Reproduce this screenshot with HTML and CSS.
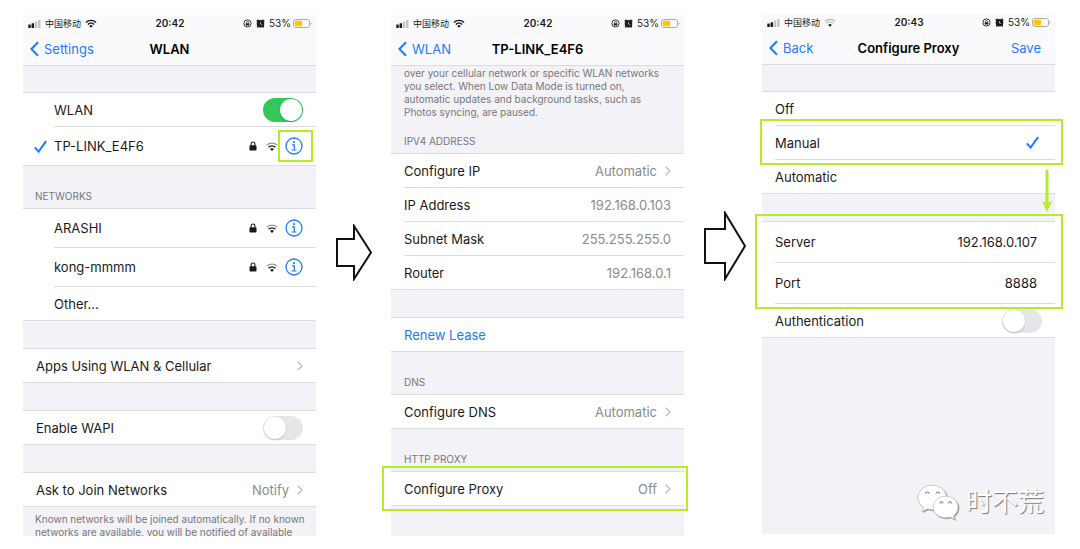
FILE: index.html
```html
<!DOCTYPE html>
<html lang="en">
<head>
  <meta charset="UTF-8">
  <title>iPhone proxy setup</title>
  <link rel="stylesheet" href="styles.css">
</head>
<body>
  <!-- shared icons -->
  <svg class="sprite" aria-hidden="true">
    <symbol id="signal" viewBox="0 0 14 9">
      <rect x="0" y="5" width="2.8" height="4" rx=".6"/>
      <rect x="3.7" y="3.6" width="2.8" height="5.4" rx=".6"/>
      <rect x="7.4" y="1.8" width="2.6" height="7.2" rx=".6" opacity=".25"/>
      <rect x="11.1" y="0" width="2.6" height="9" rx=".6" opacity=".25"/>
    </symbol>
    <symbol id="wifi" viewBox="0 0 12 9">
      <path d="M.9 3.4a7.4 7.4 0 0 1 10.2 0" fill="none" stroke="currentColor" stroke-width="1.4"/>
      <path d="M2.8 5.4a4.7 4.7 0 0 1 6.4 0" fill="none" stroke="currentColor" stroke-width="1.4"/>
      <path d="M4.2 6.900a2.700 2.700 0 0 1 3.600 0L6 8.800z"/>
    </symbol>
    <symbol id="wifi-mid" viewBox="0 0 12 9">
      <path d="M.8 3.300a7.500 7.500 0 0 1 10.400 0" fill="none" stroke="currentColor" stroke-width="1.3" opacity=".45"/>
      <path d="M2.600 5.300a5 5 0 0 1 6.800 0" fill="none" stroke="currentColor" stroke-width="1.5"/>
      <path d="M4.100 6.900a2.800 2.800 0 0 1 3.800 0L6 8.900z"/>
    </symbol>
    <symbol id="wifi-low" viewBox="0 0 12 9">
      <path d="M.9 3.4a7.4 7.4 0 0 1 10.2 0M2.8 5.4a4.7 4.7 0 0 1 6.4 0" fill="none" stroke="currentColor" stroke-width="1.2" opacity=".3"/>
      <path d="M4.2 6.9a2.7 2.7 0 0 1 3.6 0L6 8.8z"/>
    </symbol>
    <symbol id="rotation" viewBox="0 0 9 9">
      <circle cx="4.5" cy="4.5" r="3.6" fill="none" stroke="currentColor" stroke-width=".9"/>
      <rect x="2.700" y="4.200" width="3.600" height="2.200" rx=".4"/>
      <path d="M3.500 4.400v-.8a1 1 0 0 1 2 0v.8" fill="none" stroke="currentColor" stroke-width=".7"/>
    </symbol>
    <symbol id="alarm" viewBox="0 0 9 9">
      <circle cx="4.5" cy="4.800" r="3.800"/>
      <path d="M.7 2.600L2.600.8M8.300 2.600L6.400.8M2.200 7.400l-.9 1.100M6.800 7.400l.9 1.100" stroke="currentColor" stroke-width="1.400"/>
      <path d="M4.500 3v2.100l1.500.5" fill="none" stroke="#fff" stroke-width=".6"/>
    </symbol>
    <symbol id="battery" viewBox="0 0 19 9">
      <rect x=".5" y=".5" width="16" height="8" rx="2.2" fill="none" stroke="#a9a9ad"/>
      <rect x="1.7" y="1.7" width="7.6" height="5.6" rx="1" fill="#fdc800"/>
      <path d="M17.6 3.2q1 .3 1 1.3t-1 1.3z" fill="#a9a9ad"/>
    </symbol>
    <symbol id="back" viewBox="0 0 9 16">
      <path d="M8 1.2L1.4 8 8 14.8" fill="none" stroke="currentColor" stroke-width="2"/>
    </symbol>
    <symbol id="chevron" viewBox="0 0 6 10">
      <path d="M.7.8L5 5 .7 9.2" fill="none" stroke="currentColor" stroke-width="1.3"/>
    </symbol>
    <symbol id="check" viewBox="0 0 12 12">
      <path d="M.8 6.7l3.4 4L11.2 1" fill="none" stroke="currentColor" stroke-width="1.8"/>
    </symbol>
    <symbol id="lock" viewBox="0 0 8 10">
      <rect x=".5" y="4.2" width="7" height="5.3" rx=".8"/>
      <path d="M2.1 4.6V2.9a1.9 1.9 0 0 1 3.8 0v1.7" fill="none" stroke="currentColor" stroke-width="1.1"/>
    </symbol>
    <symbol id="info" viewBox="0 0 18 18">
      <circle cx="9" cy="9" r="8" fill="none" stroke="currentColor" stroke-width="1.3"/>
      <circle cx="8.900" cy="5.100" r="1.100"/>
      <path d="M7 7.800h2.300v5M6.500 13h5" fill="none" stroke="currentColor" stroke-width="1.200"/>
    </symbol>
  </svg>

  <main class="steps">
    <section class="phone">
      <div class="status-bar">
        <div class="status-left">
          <svg class="i-signal"><use href="#signal"/></svg>
          <span class="carrier">中国移动</span>
          <svg class="i-wifi"><use href="#wifi"/></svg>
        </div>
        <span class="clock">20:42</span>
        <div class="status-right">
          <svg class="i-small"><use href="#rotation"/></svg>
          <svg class="i-small"><use href="#alarm"/></svg>
          <span class="percent">53%</span>
          <svg class="i-battery"><use href="#battery"/></svg>
        </div>
      </div>
      <header class="nav">
        <a class="nav-back" href="#"><svg class="i-back"><use href="#back"/></svg>Settings</a>
        <h2>WLAN</h2>
      </header>

      <div class="group group-first group-indent">
        <label class="row">
          <span>WLAN</span>
          <input class="switch" type="checkbox" checked>
        </label>
        <div class="row row-tall">
          <svg class="i-check current"><use href="#check"/></svg>
          <span>TP-LINK_E4F6</span>
          <svg class="i-lock"><use href="#lock"/></svg>
          <svg class="i-wifi"><use href="#wifi-mid"/></svg>
          <button class="info marked" aria-label="TP-LINK_E4F6 details"><svg class="i-info"><use href="#info"/></svg></button>
        </div>
      </div>

      <h3>NETWORKS</h3>
      <div class="group group-indent">
        <div class="row row-tall">
          <span>ARASHI</span>
          <svg class="i-lock"><use href="#lock"/></svg>
          <svg class="i-wifi"><use href="#wifi-mid"/></svg>
          <button class="info" aria-label="ARASHI details"><svg class="i-info"><use href="#info"/></svg></button>
        </div>
        <div class="row row-tall">
          <span>kong-mmmm</span>
          <svg class="i-lock"><use href="#lock"/></svg>
          <svg class="i-wifi"><use href="#wifi-mid"/></svg>
          <button class="info" aria-label="kong-mmmm details"><svg class="i-info"><use href="#info"/></svg></button>
        </div>
        <a class="row" href="#"><span>Other...</span></a>
      </div>

      <div class="group group-gap">
        <a class="row" href="#">
          <span>Apps Using WLAN &amp; Cellular</span>
          <svg class="i-chevron"><use href="#chevron"/></svg>
        </a>
      </div>

      <div class="group group-gap">
        <label class="row">
          <span>Enable WAPI</span>
          <input class="switch" type="checkbox">
        </label>
      </div>

      <div class="group group-gap">
        <a class="row" href="#">
          <span>Ask to Join Networks</span>
          <span class="value">Notify</span>
          <svg class="i-chevron"><use href="#chevron"/></svg>
        </a>
      </div>
      <p class="note note-bottom">Known networks will be joined automatically. If no known<br>networks are available, you will be notified of available</p>
    </section>

    <div class="next">
      <svg width="36" height="57" viewBox="0 0 36 57"><path d="M1 15h17V2l17 26.500L18 55V42H1z"/></svg>
    </div>

    <section class="phone">
      <div class="status-bar">
        <div class="status-left">
          <svg class="i-signal"><use href="#signal"/></svg>
          <span class="carrier">中国移动</span>
          <svg class="i-wifi"><use href="#wifi"/></svg>
        </div>
        <span class="clock">20:42</span>
        <div class="status-right">
          <svg class="i-small"><use href="#rotation"/></svg>
          <svg class="i-small"><use href="#alarm"/></svg>
          <span class="percent">53%</span>
          <svg class="i-battery"><use href="#battery"/></svg>
        </div>
      </div>
      <header class="nav">
        <a class="nav-back" href="#"><svg class="i-back"><use href="#back"/></svg>WLAN</a>
        <h2>TP-LINK_E4F6</h2>
      </header>

      <p class="note note-top">Low Data Mode helps reduce your iPhone data usage<br>over your cellular network or specific WLAN networks<br>you select. When Low Data Mode is turned on,<br>automatic updates and background tasks, such as<br>Photos syncing, are paused.</p>

      <h3 class="after-note">IPV4 ADDRESS</h3>
      <div class="group">
        <a class="row" href="#">
          <span>Configure IP</span>
          <span class="value">Automatic</span>
          <svg class="i-chevron"><use href="#chevron"/></svg>
        </a>
        <div class="row"><span>IP Address</span><span class="value">192.168.0.103</span></div>
        <div class="row"><span>Subnet Mask</span><span class="value">255.255.255.0</span></div>
        <div class="row"><span>Router</span><span class="value">192.168.0.1</span></div>
      </div>

      <div class="group group-gap">
        <button class="row row-action">Renew Lease</button>
      </div>

      <h3>DNS</h3>
      <div class="group">
        <a class="row" href="#">
          <span>Configure DNS</span>
          <span class="value">Automatic</span>
          <svg class="i-chevron"><use href="#chevron"/></svg>
        </a>
      </div>

      <h3>HTTP PROXY</h3>
      <div class="group marked mark-proxy">
        <a class="row" href="#">
          <span>Configure Proxy</span>
          <span class="value">Off</span>
          <svg class="i-chevron"><use href="#chevron"/></svg>
        </a>
      </div>
    </section>

    <div class="next next-big">
      <svg width="43" height="70" viewBox="0 0 43 70"><path d="M1 18h20V2l20 33-20 33V52H1z"/></svg>
    </div>

    <section class="phone phone-last">
      <div class="status-bar">
        <div class="status-left">
          <svg class="i-signal"><use href="#signal"/></svg>
          <span class="carrier">中国移动</span>
          <svg class="i-wifi"><use href="#wifi-low"/></svg>
        </div>
        <span class="clock">20:43</span>
        <div class="status-right">
          <svg class="i-small"><use href="#rotation"/></svg>
          <svg class="i-small"><use href="#alarm"/></svg>
          <span class="percent">53%</span>
          <svg class="i-battery"><use href="#battery"/></svg>
        </div>
      </div>
      <header class="nav">
        <a class="nav-back" href="#"><svg class="i-back"><use href="#back"/></svg>Back</a>
        <h2>Configure Proxy</h2>
        <button class="nav-save">Save</button>
      </header>

      <div class="group group-first">
        <label class="row">
          <span>Off</span>
          <input type="radio" name="mode">
        </label>
        <label class="row marked mark-manual">
          <span>Manual</span>
          <input type="radio" name="mode" checked>
          <svg class="i-check picked"><use href="#check"/></svg>
          <svg class="down" viewBox="0 0 12 44"><path d="M6 2v34" fill="none" stroke="#b5ec28" stroke-width="3" stroke-linecap="round"/><path d="M1 32l5 2 5-2-5 11z" fill="#b5ec28"/></svg>
        </label>
        <label class="row">
          <span>Automatic</span>
          <input type="radio" name="mode">
        </label>
      </div>

      <div class="group group-gap">
        <div class="marked mark-server">
          <div class="row row-field">
            <label for="server">Server</label>
            <input id="server" type="text" value="192.168.0.107">
          </div>
          <div class="row row-field">
            <label for="port">Port</label>
            <input id="port" type="text" value="8888">
          </div>
        </div>
        <label class="row">
          <span>Authentication</span>
          <input class="switch" type="checkbox">
        </label>
      </div>

      <div class="watermark">
        <svg class="wechat" viewBox="0 0 44 38">
          <path d="M16 1C7.500 1 1 6.600 1 14c0 4.300 2.300 7.700 5.700 10L5.500 28.500l5.300-2.700c2 .6 4 .9 6.400.8C23 26 31 21 31 14S24.500 1 16 1z"/>
          <path d="M30 12.500c-7.400 0-13 5-13 11.300S22.600 35 30 35c1.700 0 3.300-.2 4.800-.7l4.700 2.500-1.200-4c2.900-2 4.700-5.300 4.700-9 0-6.300-5.600-11.300-13-11.300z"/>
          <g class="eyes">
            <path d="M9 9.800a1.800 1.800 0 0 1 3.600 0M20 9.800a1.800 1.800 0 0 1 3.600 0M24 20a1.600 1.600 0 0 1 3.200 0M33 20a1.600 1.600 0 0 1 3.200 0"/>
          </g>
        </svg>
        <span>时不荒</span>
      </div>
    </section>
  </main>
</body>
</html>
```

FILE: styles.css
```css
* {
  margin: 0;
  padding: 0;
  box-sizing: border-box;
}

:root {
  --blue: #1a7cf9;
  --green: #34c759;
  --mark: #b5ec28;
  --bg: #f2f2f7;
  --nav: #fafafc;
  --line: #dcdce0;
  --text: #1a1a1a;
  --text-dim: #8a8a8e;
  --text-note: #77777c;
}

body {
  background: #fff;
  color: var(--text);
  font-family: Inter, "Noto Sans CJK SC", sans-serif;
  font-size: 13px;
  line-height: 16px;
}

a {
  color: inherit;
  text-decoration: none;
}

button,
input {
  font: inherit;
  color: inherit;
  background: none;
  border: none;
}

svg {
  display: block;
  flex-shrink: 0;
  fill: currentColor;
}

.sprite {
  position: absolute;
  width: 0;
  height: 0;
}

.steps {
  display: flex;
  padding: 14px 25px 13px 23px;
}

.phone {
  flex: 1 1 0;
  min-width: 0;
  margin-top: 1px;
  display: flex;
  flex-direction: column;
  background: var(--bg);
}

.phone-last {
  margin-top: 0;
  margin-bottom: 2px;
}

/* arrows between the phones */
.next {
  width: 75px;
  padding: 210px 0 0 20px;
}

.next-big {
  width: 78px;
  padding-top: 197px;
}

.next path {
  fill: #fff;
  stroke: #111;
  stroke-width: 2;
}

/* status bar */
.status-bar {
  display: grid;
  grid-template-columns: 1fr auto 1fr;
  align-items: center;
  height: 17px;
  padding: 0 4px 0 5px;
  background: var(--nav);
  font-size: 10px;
  line-height: 17px;
}

.status-left,
.status-right {
  display: flex;
  align-items: center;
  gap: 4px;
}

.status-right {
  justify-content: flex-end;
}

.carrier {
  font-size: 9px;
}

.clock {
  font-weight: 600;
}

.percent {
  margin-right: -2px;
}

.i-signal { width: 13px; height: 8px; }
.i-wifi { width: 12px; height: 9px; }
.i-small { width: 9px; height: 9px; }
.i-battery { width: 19px; height: 9px; }
.i-back { width: 9px; height: 16px; }
.i-chevron { width: 6px; height: 10px; color: #bcbcc0; }
.i-check { width: 13px; height: 13px; color: var(--blue); }
.i-lock { width: 8px; height: 10px; }
.i-info { width: 18px; height: 18px; }

/* navigation bar */
.nav {
  display: grid;
  grid-template-columns: 1fr auto 1fr;
  align-items: center;
  height: 34px;
  padding: 0 7px;
  background: var(--nav);
  border-bottom: 1px solid var(--line);
}

.nav h2 {
  font-size: 13px;
  font-weight: 600;
  color: #000;
}

.nav-back {
  display: flex;
  align-items: center;
  gap: 5px;
  color: var(--blue);
}

.nav-save {
  justify-self: end;
  margin-right: 7px;
  color: var(--blue);
}

/* lists */
.group {
  background: #fff;
  border: solid var(--line);
  border-width: 1px 0;
}

.group-first {
  margin-top: 26px;
}

.group-gap {
  margin-top: 27px;
}

.row {
  position: relative;
  display: flex;
  align-items: center;
  min-height: 33px;
  margin-left: 13px;
  padding-right: 13px;
}

.row + .row,
.mark-server + .row {
  border-top: 1px solid var(--line);
  min-height: 34px;
}

.group-indent .row {
  margin-left: 31px;
}

.group .row-tall {
  min-height: 38px;
}

.group .row + .row-tall {
  min-height: 39px;
}

.row > :first-child {
  margin-right: auto;
}

.row-tall .i-wifi {
  margin: 0 7px 0 9px;
}

.row-field {
  min-height: 40px;
}

.row + .row-field {
  min-height: 41px;
}

.row-field input {
  flex: 1;
  min-width: 0;
  padding-right: 5px;
  text-align: right;
}

.row-action {
  color: var(--blue);
}

.current + span {
  margin-right: auto;
}

.row > .current {
  position: absolute;
  left: -20px;
}

.value {
  color: var(--text-dim);
}

.i-chevron {
  margin-left: 8px;
}

.info {
  position: relative;
  color: var(--blue);
}

h3 {
  display: flex;
  align-items: flex-end;
  height: 42px;
  padding: 0 13px 5px;
  font-size: 10px;
  line-height: 14px;
  font-weight: 400;
  color: var(--text-note);
}

h3.after-note {
  height: 34px;
}

.group-indent + h3 {
  padding-left: 12px;
}

.note {
  padding: 0 13px;
  font-size: 10px;
  line-height: 13px;
  color: var(--text-note);
  white-space: nowrap;
  overflow: hidden;
}

.note-bottom {
  height: 29px;
  padding: 6px 12px 0;
}

/* scrolled under the navigation bar */
.note-top {
  display: flex;
  align-items: flex-end;
  height: 53px;
}

/* switches and radios */
.switch {
  appearance: none;
  width: 40px;
  height: 24px;
  border-radius: 12px;
  background: #e6e6e8;
}

.switch::before {
  content: "";
  display: block;
  width: 22px;
  height: 22px;
  margin: 1px;
  border-radius: 50%;
  background: #fff;
  box-shadow: 0 1px 2px rgba(0, 0, 0, 0.2);
}

.switch:checked {
  background: var(--green);
}

.switch:checked::before {
  margin-left: 17px;
}

input[type="radio"] {
  appearance: none;
}

.picked {
  margin-right: 3px;
}

/* green highlights */
.marked {
  position: relative;
}

.marked::after {
  content: "";
  position: absolute;
  z-index: 1;
  inset: -7px -10px -7px -7px;
  border: 2px solid var(--mark);
  pointer-events: none;
}

.mark-proxy::after {
  inset: -6px -4px -6px -9px;
}

.mark-manual::after {
  inset: -7px -8px -6px -15px;
}

.mark-server::after {
  inset: -8px -8px -6px -7px;
}

.down {
  position: absolute;
  top: 43px;
  right: 2px;
  width: 12px;
  height: 44px;
  z-index: 1;
}

/* account mark in the corner */
.watermark {
  display: flex;
  align-items: center;
  justify-content: flex-end;
  gap: 7px;
  margin-top: auto;
  padding: 0 11px 12px;
  font-size: 26px;
  line-height: 40px;
  color: #fff;
  text-shadow: 1px 1px 1px #777;
}

.wechat {
  width: 42px;
  height: 37px;
  overflow: visible;
  filter: drop-shadow(1px 1px 0 #999);
}

.wechat > path {
  stroke: #aaa;
  stroke-width: 0.6;
}

.eyes path {
  fill: none;
  stroke: #888;
  stroke-width: 1.2;
}
```
